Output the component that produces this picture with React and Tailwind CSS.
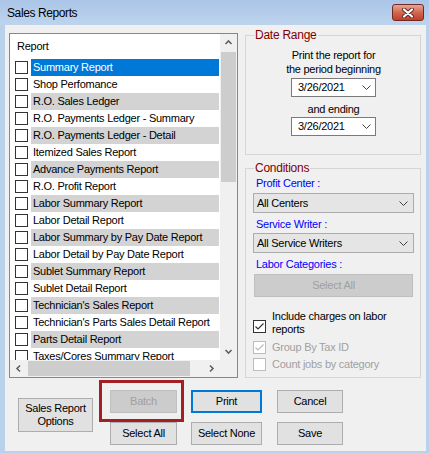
import React from "react";

const reports = [
  "Summary Report",
  "Shop Perfomance",
  "R.O. Sales Ledger",
  "R.O. Payments Ledger - Summary",
  "R.O. Payments Ledger - Detail",
  "Itemized Sales Report",
  "Advance Payments Report",
  "R.O. Profit Report",
  "Labor Summary Report",
  "Labor Detail Report",
  "Labor Summary by Pay Date Report",
  "Labor Detail by Pay Date Report",
  "Sublet Summary Report",
  "Sublet Detail Report",
  "Technician's Sales Report",
  "Technician's Parts Sales Detail Report",
  "Parts Detail Report",
  "Taxes/Cores Summary Report",
];

// small scrollbar chevrons
const ScrollArrow = ({ dir }) => {
  const pts = {
    up: "1.5,6 4.5,3 7.5,6",
    down: "1.5,3 4.5,6 7.5,3",
    left: "6,1.5 3,4.5 6,7.5",
    right: "3,1.5 6,4.5 3,7.5",
  }[dir];
  return (
    <svg width="9" height="9" viewBox="0 0 9 9">
      <polyline points={pts} fill="none" stroke="#606060" strokeWidth="1.6" />
    </svg>
  );
};

const DropArrow = () => (
  <svg width="9" height="5" viewBox="0 0 9 5">
    <polyline points="0.5,0.5 4.5,4.5 8.5,0.5" fill="none" stroke="#404040" strokeWidth="1" />
  </svg>
);

const Check = ({ checked, disabled }) => (
  <span
    className={`w-[13px] h-[13px] shrink-0 border bg-white flex items-center justify-center ${
      disabled ? "border-[#bcbcbc]" : "border-[#333333]"
    }`}
  >
    {checked && (
      <svg width="11" height="11" viewBox="0 0 11 11">
        <polyline
          points="1.5,5.5 4,8 9.5,2.5"
          fill="none"
          stroke={disabled ? "#bcbcbc" : "#333333"}
          strokeWidth="1.2"
        />
      </svg>
    )}
  </span>
);

const DateBox = ({ value }) => (
  <div className="w-[85px] h-[19px] border border-[#7a7a7a] bg-white flex items-center pl-[6px] pr-[4px]">
    <span className="flex-1 text-[11px] leading-[17px]">{value}</span>
    <DropArrow />
  </div>
);

const Combo = ({ value }) => (
  <div className="h-[20px] border border-[#acacac] bg-[#e5e5e5] flex items-center pl-[3px] pr-[5px]">
    <span className="flex-1 text-[11px] leading-[18px]">{value}</span>
    <DropArrow />
  </div>
);

const Btn = ({ children, className = "", disabled }) => (
  <button
    className={`h-[23px] text-[11px] leading-[13px] ${
      disabled
        ? "bg-[#cccccc] border border-[#bfbfbf] text-[#a0a0a0]"
        : "bg-[#e1e1e1] border border-[#adadad] text-black"
    } ${className}`}
  >
    {children}
  </button>
);

export default function App() {
  return (
    <div className="w-[429px] h-[453px] bg-[#b9d1ea] flex flex-col font-['Liberation_Sans',Arial,sans-serif] text-black tracking-[-0.25px]">
      {/* Title bar */}
      <div className="h-[25px] flex items-start bg-gradient-to-b from-[#aac5e7] to-[#bed4ed]">
        <span className="ml-[7px] mt-[6px] text-[12px] leading-[14px] tracking-[-0.4px]">Sales Reports</span>
        <div className="ml-auto mr-[5px] mt-[4px] w-[32px] h-[17px] rounded-[3px] border border-[#6f2a23] bg-gradient-to-b from-[#e8a597] via-[#d3664f] to-[#c13e25] flex items-center justify-center">
          <svg width="14" height="10" viewBox="0 0 14 10">
            <path d="M3 1.5 L11 8.5 M11 1.5 L3 8.5" stroke="#5a2a24" strokeWidth="4" strokeLinecap="round" />
            <path d="M3 1.5 L11 8.5 M11 1.5 L3 8.5" stroke="#ffffff" strokeWidth="2.2" strokeLinecap="round" />
          </svg>
        </div>
      </div>

      {/* Client area */}
      <div className="flex-1 ml-[5px] mr-[3px] mb-[2px] bg-[#f0f0f0] flex flex-col">
        <div className="flex items-start pl-[4px]">
          {/* Report list */}
          <div className="mt-[8px] w-[229px] h-[345px] border border-[#828790] bg-white flex flex-col">
            <div className="flex flex-1 min-h-0">
              <div className="flex-1 overflow-hidden text-[11px]">
                <div className="h-[25px] pl-[7px] pt-[4px] leading-[17px]">Report</div>
                {reports.map((r, i) => (
                  <div key={r} className="flex items-center h-[17px] pl-[5px] pr-[1px]">
                    <Check />
                    <div
                      className={`ml-[3px] flex-1 h-[17px] pl-[2px] leading-[17px] whitespace-nowrap ${
                        i === 0
                          ? "bg-[#0078d7] text-white"
                          : i % 2 === 0
                          ? "bg-[#d3d3d3]"
                          : "bg-white"
                      }`}
                    >
                      {r}
                    </div>
                  </div>
                ))}
              </div>
              <div className="w-[17px] bg-[#f0f0f0] flex flex-col">
                <div className="h-[17px] flex items-center justify-center">
                  <ScrollArrow dir="up" />
                </div>
                <div className="h-[130px] mt-[1px] mx-[1px] bg-[#cdcdcd]" />
                <div className="flex-1" />
                <div className="h-[17px] flex items-center justify-center">
                  <ScrollArrow dir="down" />
                </div>
              </div>
            </div>
            <div className="h-[17px] flex bg-[#f0f0f0]">
              <div className="w-[17px] flex items-center justify-center">
                <ScrollArrow dir="left" />
              </div>
              <div className="w-[162px] ml-[1px] my-[1px] bg-[#cdcdcd]" />
              <div className="flex-1" />
              <div className="w-[17px] flex items-center justify-center">
                <ScrollArrow dir="right" />
              </div>
              <div className="w-[17px]" />
            </div>
          </div>

          {/* Right column */}
          <div className="ml-[7px] mt-[4px] w-[176px] flex flex-col text-[11px]">
            <fieldset className="border border-[#d5d5d5] pl-[7px] pr-[6px] pt-[7px] pb-[18px] flex flex-col items-center">
              <legend className="ml-[1px] px-[1px] text-[12px] leading-[12px] text-[#800000]">Date Range</legend>
              <div className="text-center leading-[14px]">
                Print the report for
                <br />
                the period beginning
              </div>
              <div className="mt-[2px]">
                <DateBox value="3/26/2021" />
              </div>
              <div className="mt-[5px] leading-[14px]">and ending</div>
              <div className="mt-[1px]">
                <DateBox value="3/26/2021" />
              </div>
            </fieldset>

            <fieldset className="mt-[7px] border border-[#d5d5d5] pl-[7px] pr-[6px] pt-[2px] pb-[4px] flex flex-col">
              <legend className="ml-[1px] px-[1px] text-[12px] leading-[12px] text-[#800000]">Conditions</legend>
              <div className="pl-[3px] leading-[14px] text-[#0000ff]">Profit Center :</div>
              <div className="mt-[3px]">
                <Combo value="All Centers" />
              </div>
              <div className="mt-[4px] pl-[3px] leading-[14px] text-[#0000ff]">Service Writer :</div>
              <div className="mt-[2px]">
                <Combo value="All Service Writers" />
              </div>
              <div className="mt-[4px] pl-[3px] leading-[14px] text-[#0000ff]">Labor Categories :</div>
              <Btn disabled className="mt-[3px] mx-[1px]">
                Select All
              </Btn>
              <div className="mt-[13px] flex items-start">
                <span className="mt-[10px]">
                  <Check checked />
                </span>
                <span className="ml-[6px] w-[128px] leading-[13px]">Include charges on labor reports</span>
              </div>
              <div className="mt-[3px] h-[17px] flex items-center">
                <Check checked disabled />
                <span className="ml-[6px] text-[#a0a0a0]">Group By Tax ID</span>
              </div>
              <div className="h-[17px] flex items-center">
                <Check disabled />
                <span className="ml-[6px] text-[#a0a0a0]">Count jobs by category</span>
              </div>
            </fieldset>
          </div>
        </div>

        {/* Buttons */}
        <div className="mt-[12px] flex items-start">
          <Btn className="ml-[13px] mt-[8px] w-[75px] !h-[34px]">
            Sales Report
            <br />
            Options
          </Btn>
          <div className="relative ml-[17px] w-[67px] flex flex-col gap-[9px]">
            <div className="absolute left-[-11px] top-[-10px] w-[85px] h-[42px] border-[3px] border-[#a31f24]" />
            <Btn disabled>Batch</Btn>
            <Btn>Select All</Btn>
          </div>
          <div className="ml-[14px] w-[71px] flex flex-col gap-[9px]">
            <Btn className="!border-2 !border-[#0078d7]">Print</Btn>
            <Btn>Select None</Btn>
          </div>
          <div className="ml-[15px] w-[66px] flex flex-col gap-[9px]">
            <Btn>Cancel</Btn>
            <Btn>Save</Btn>
          </div>
        </div>
      </div>
    </div>
  );
}
